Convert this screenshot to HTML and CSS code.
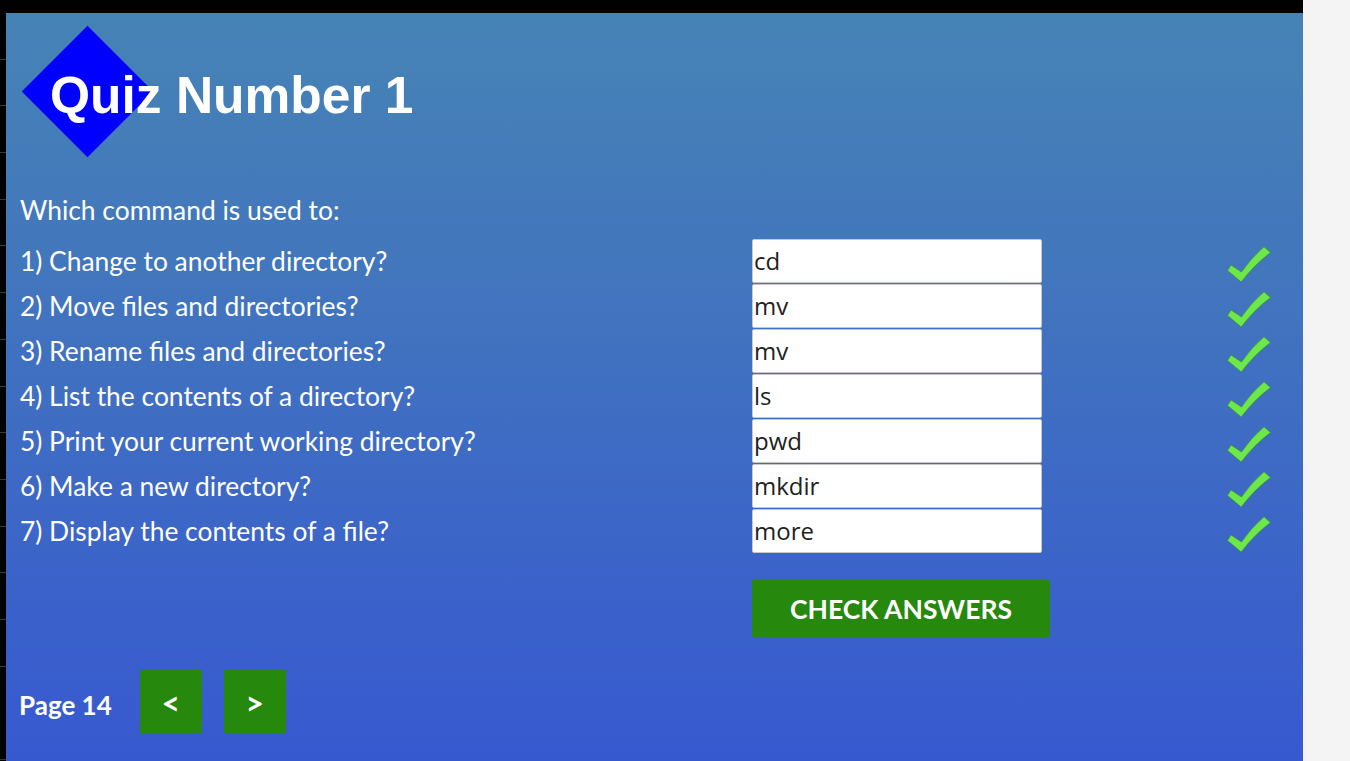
FILE: index.html
```html
<!DOCTYPE html>
<html>
<head>
<meta charset="utf-8">
<title>Quiz Number 1</title>
<link rel="stylesheet" href="styles.css">
</head>
<body>
<div class="frame">
  <main class="panel">
    <header class="header">
      <h1 class="title">Quiz Number 1</h1>
    </header>
    <p class="intro">Which command is used to:</p>
    <div class="quiz">
      <div class="q">1) Change to another directory?</div>
      <input class="answer" type="text" value="cd">
      <svg class="check" viewBox="0 0 44 37"><path d="M0.5,24.5 L4,19 L14.5,26 Q24,12 37,0.8 L43.5,6.5 Q27,19 14.2,36 Z"/></svg>

      <div class="q">2) Move files and directories?</div>
      <input class="answer" type="text" value="mv">
      <svg class="check" viewBox="0 0 44 37"><path d="M0.5,24.5 L4,19 L14.5,26 Q24,12 37,0.8 L43.5,6.5 Q27,19 14.2,36 Z"/></svg>

      <div class="q">3) Rename files and directories?</div>
      <input class="answer" type="text" value="mv">
      <svg class="check" viewBox="0 0 44 37"><path d="M0.5,24.5 L4,19 L14.5,26 Q24,12 37,0.8 L43.5,6.5 Q27,19 14.2,36 Z"/></svg>

      <div class="q">4) List the contents of a directory?</div>
      <input class="answer" type="text" value="ls">
      <svg class="check" viewBox="0 0 44 37"><path d="M0.5,24.5 L4,19 L14.5,26 Q24,12 37,0.8 L43.5,6.5 Q27,19 14.2,36 Z"/></svg>

      <div class="q">5) Print your current working directory?</div>
      <input class="answer" type="text" value="pwd">
      <svg class="check" viewBox="0 0 44 37"><path d="M0.5,24.5 L4,19 L14.5,26 Q24,12 37,0.8 L43.5,6.5 Q27,19 14.2,36 Z"/></svg>

      <div class="q">6) Make a new directory?</div>
      <input class="answer" type="text" value="mkdir">
      <svg class="check" viewBox="0 0 44 37"><path d="M0.5,24.5 L4,19 L14.5,26 Q24,12 37,0.8 L43.5,6.5 Q27,19 14.2,36 Z"/></svg>

      <div class="q">7) Display the contents of a file?</div>
      <input class="answer" type="text" value="more">
      <svg class="check" viewBox="0 0 44 37"><path d="M0.5,24.5 L4,19 L14.5,26 Q24,12 37,0.8 L43.5,6.5 Q27,19 14.2,36 Z"/></svg>

      <div class="spacer"></div>
      <button class="check-btn" type="button">CHECK ANSWERS</button>
    </div>
    <nav class="pager">
      <span class="page-label">Page 14</span>
      <button class="nav-btn" type="button">&lt;</button>
      <button class="nav-btn" type="button">&gt;</button>
    </nav>
  </main>
</div>
</body>
</html>
```
FILE: styles.css
```css
html, body {
  margin: 0;
  padding: 0;
}
body {
  background: #f4f4f4;
  width: 1350px;
  height: 761px;
  overflow: hidden;
}
.frame {
  width: 1303px;
  height: 761px;
  box-sizing: border-box;
  padding: 13px 0 0 6px;
  background-color: #000;
  background-image: repeating-linear-gradient(to bottom, transparent 0, transparent 45.7px, #3a3a3a 45.7px, #3a3a3a 46.7px);
  background-position: 0 13px;
  display: flex;
}
.panel {
  width: 1297px;
  height: 748px;
  background: linear-gradient(to bottom, #4683b5 0%, #4276bd 35%, #3b63c9 75%, #3759d0 100%);
  color: #fff;
  font-family: Lato, "Open Sans", sans-serif;
  box-sizing: border-box;
  padding-left: 14px;
}
.header {
  position: relative;
  padding-top: 52px;
}
.header::before {
  content: "";
  position: absolute;
  left: 21px;
  top: 31.5px;
  width: 93px;
  height: 93px;
  background: #0000ff;
  transform: rotate(45deg);
}
.title {
  position: relative;
  margin: 0 0 0 30px;
  font-family: "Liberation Sans", Arial, sans-serif;
  font-weight: bold;
  font-size: 51.5px;
  line-height: 60px;
  color: #fff;
}
.intro {
  margin: 70px 0 13px 0;
  font-size: 26.4px;
  line-height: 31px;
}
.quiz {
  display: grid;
  grid-template-columns: 732px 290px 229px;
  grid-auto-rows: 45px;
  align-items: center;
}
.q {
  font-size: 26.4px;
  line-height: 31px;
}
.answer {
  width: 290px;
  height: 44px;
  box-sizing: border-box;
  margin: 0 0 1px 0;
  align-self: start;
  border: 1px solid #c8c8c8;
  border-radius: 2px;
  padding: 0 0 1px 1px;
  font-family: "Open Sans", "Noto Sans", sans-serif;
  font-size: 24px;
  color: #222;
  background: #fff;
  outline: none;
}
.check {
  justify-self: end;
  width: 44px;
  height: 37px;
  margin-top: 5px;
}
.check path {
  fill: #6de84b;
  stroke: #3f8a3a;
  stroke-width: 0.7;
  stroke-linejoin: round;
}
.spacer {
  grid-column: 1;
}
.check-btn {
  grid-column: 2 / span 2;
  justify-self: start;
  align-self: start;
  margin-top: 26px;
  width: 298px;
  height: 57px;
  border: none;
  border-radius: 2px;
  background: #26880c;
  color: #fff;
  font-family: Lato, sans-serif;
  font-weight: bold;
  font-size: 26.5px;
  padding: 0;
}
.pager {
  display: flex;
  align-items: center;
  margin-top: 71px;
}
.page-label {
  font-weight: bold;
  font-size: 26px;
  line-height: 31px;
  padding-top: 6px;
  margin-left: -1px;
  margin-right: 28px;
}
.nav-btn {
  width: 62px;
  height: 64px;
  border: none;
  border-radius: 2px;
  background: #26880c;
  color: #fff;
  font-family: Lato, sans-serif;
  font-weight: bold;
  font-size: 32px;
  padding: 0;
  margin-right: 22px;
}
```
